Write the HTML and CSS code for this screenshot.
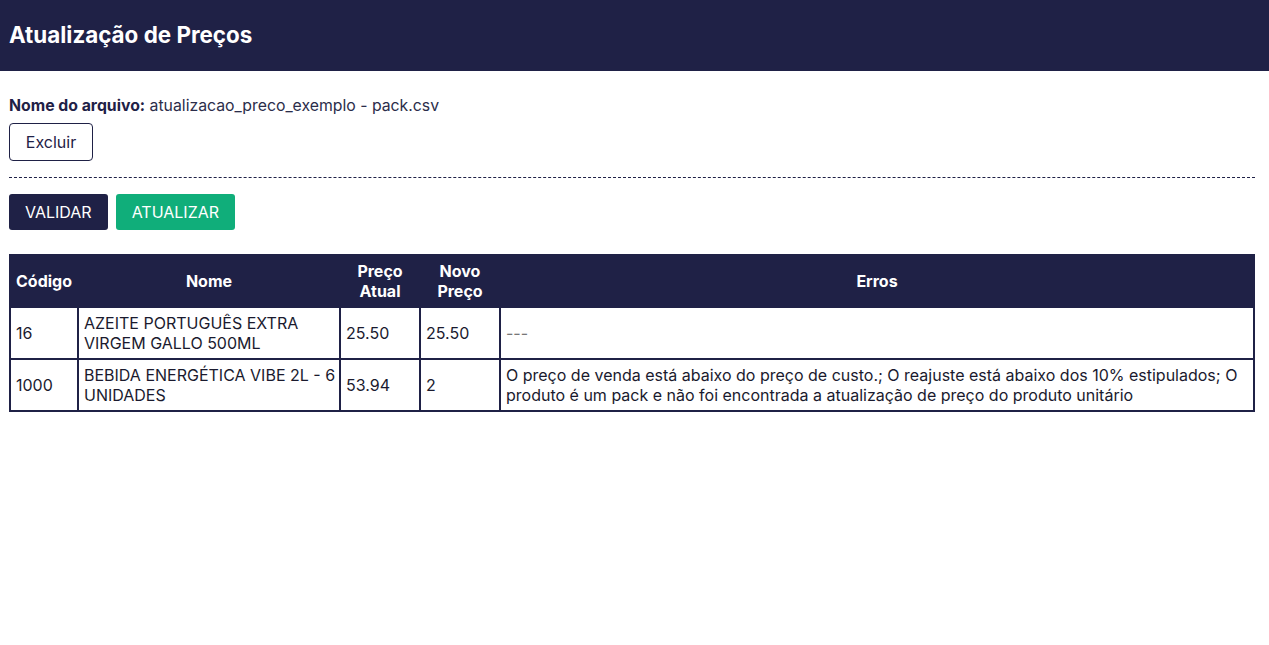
FILE: index.html
```html
<!DOCTYPE html>
<html lang="pt">
<head>
<meta charset="utf-8">
<title>Atualização de Preços</title>
<link rel="stylesheet" href="styles.css">
</head>
<body>
<header class="topbar">
  <h1 class="title">Atualização de Preços</h1>
</header>
<main class="content">
  <p class="file"><strong>Nome do arquivo:</strong> atualizacao_preco_exemplo - pack.csv</p>
  <button class="btn-outline">Excluir</button>
  <hr class="divider">
  <div class="actions">
    <button class="btn btn-dark">VALIDAR</button>
    <button class="btn btn-green">ATUALIZAR</button>
  </div>
  <table class="grid">
    <colgroup>
      <col class="c-cod"><col class="c-nome"><col class="c-preco"><col class="c-preco"><col>
    </colgroup>
    <thead>
      <tr><th>Código</th><th>Nome</th><th>Preço<br>Atual</th><th>Novo<br>Preço</th><th>Erros</th></tr>
    </thead>
    <tbody>
      <tr><td>16</td><td>AZEITE PORTUGUÊS EXTRA VIRGEM GALLO 500ML</td><td>25.50</td><td>25.50</td><td class="muted">---</td></tr>
      <tr><td>1000</td><td>BEBIDA ENERGÉTICA VIBE 2L - 6 UNIDADES</td><td>53.94</td><td>2</td><td>O preço de venda está abaixo do preço de custo.; O reajuste está abaixo dos 10% estipulados; O produto é um pack e não foi encontrada a atualização de preço do produto unitário</td></tr>
    </tbody>
  </table>
</main>
</body>
</html>
```
FILE: styles.css
```css
* { box-sizing: border-box; }
html, body { margin: 0; padding: 0; background: #fff; }
body { font-family: Inter, "Noto Sans", sans-serif; color: #1f2146; }
.topbar { background: #1f2146; height: 71px; display: flex; align-items: center; padding: 0 9px 3px; }
.title { margin: 0; color: #fff; font-size: 22.4px; font-weight: 700; }
.content { padding: 25px 14px 0 9px; }
.file { margin: 0 0 8px; font-size: 15.8px; line-height: 19px; color: #2b2d4a; }
.file strong { font-weight: 700; color: #1f2146; }
.btn-outline { font-family: inherit; font-size: 16px; color: #1f2146; background: #fff; border: 1px solid #1f2146; border-radius: 4px; width: 84px; height: 38px; padding: 0; }
.divider { border: 0; border-top: 1px dashed #1f2146; margin: 16px 0 16px; }
.actions { display: flex; gap: 8px; margin-bottom: 24px; }
.btn { font-family: inherit; font-size: 16px; border: 0; border-radius: 3px; height: 36px; padding: 0 16px; color: #fff; }
.btn-dark { background: #1f2146; }
.btn-green { background: #10ae7a; }
.grid { width: 100%; border-collapse: collapse; table-layout: fixed; font-size: 16px; line-height: 20px; }
.c-cod { width: 68px; }
.c-nome { width: 262px; }
.c-preco { width: 80px; }
.grid th { background: #1f2146; color: #fff; font-weight: 700; text-align: center; height: 52px; padding: 4px 4px; border: 2px solid #1f2146; }
.grid td { border: 2px solid #1f2146; padding: 5px 2px 5px 5px; height: 52px; color: #1a1a2e; vertical-align: middle; }
.grid td.muted { color: #777; }
```
